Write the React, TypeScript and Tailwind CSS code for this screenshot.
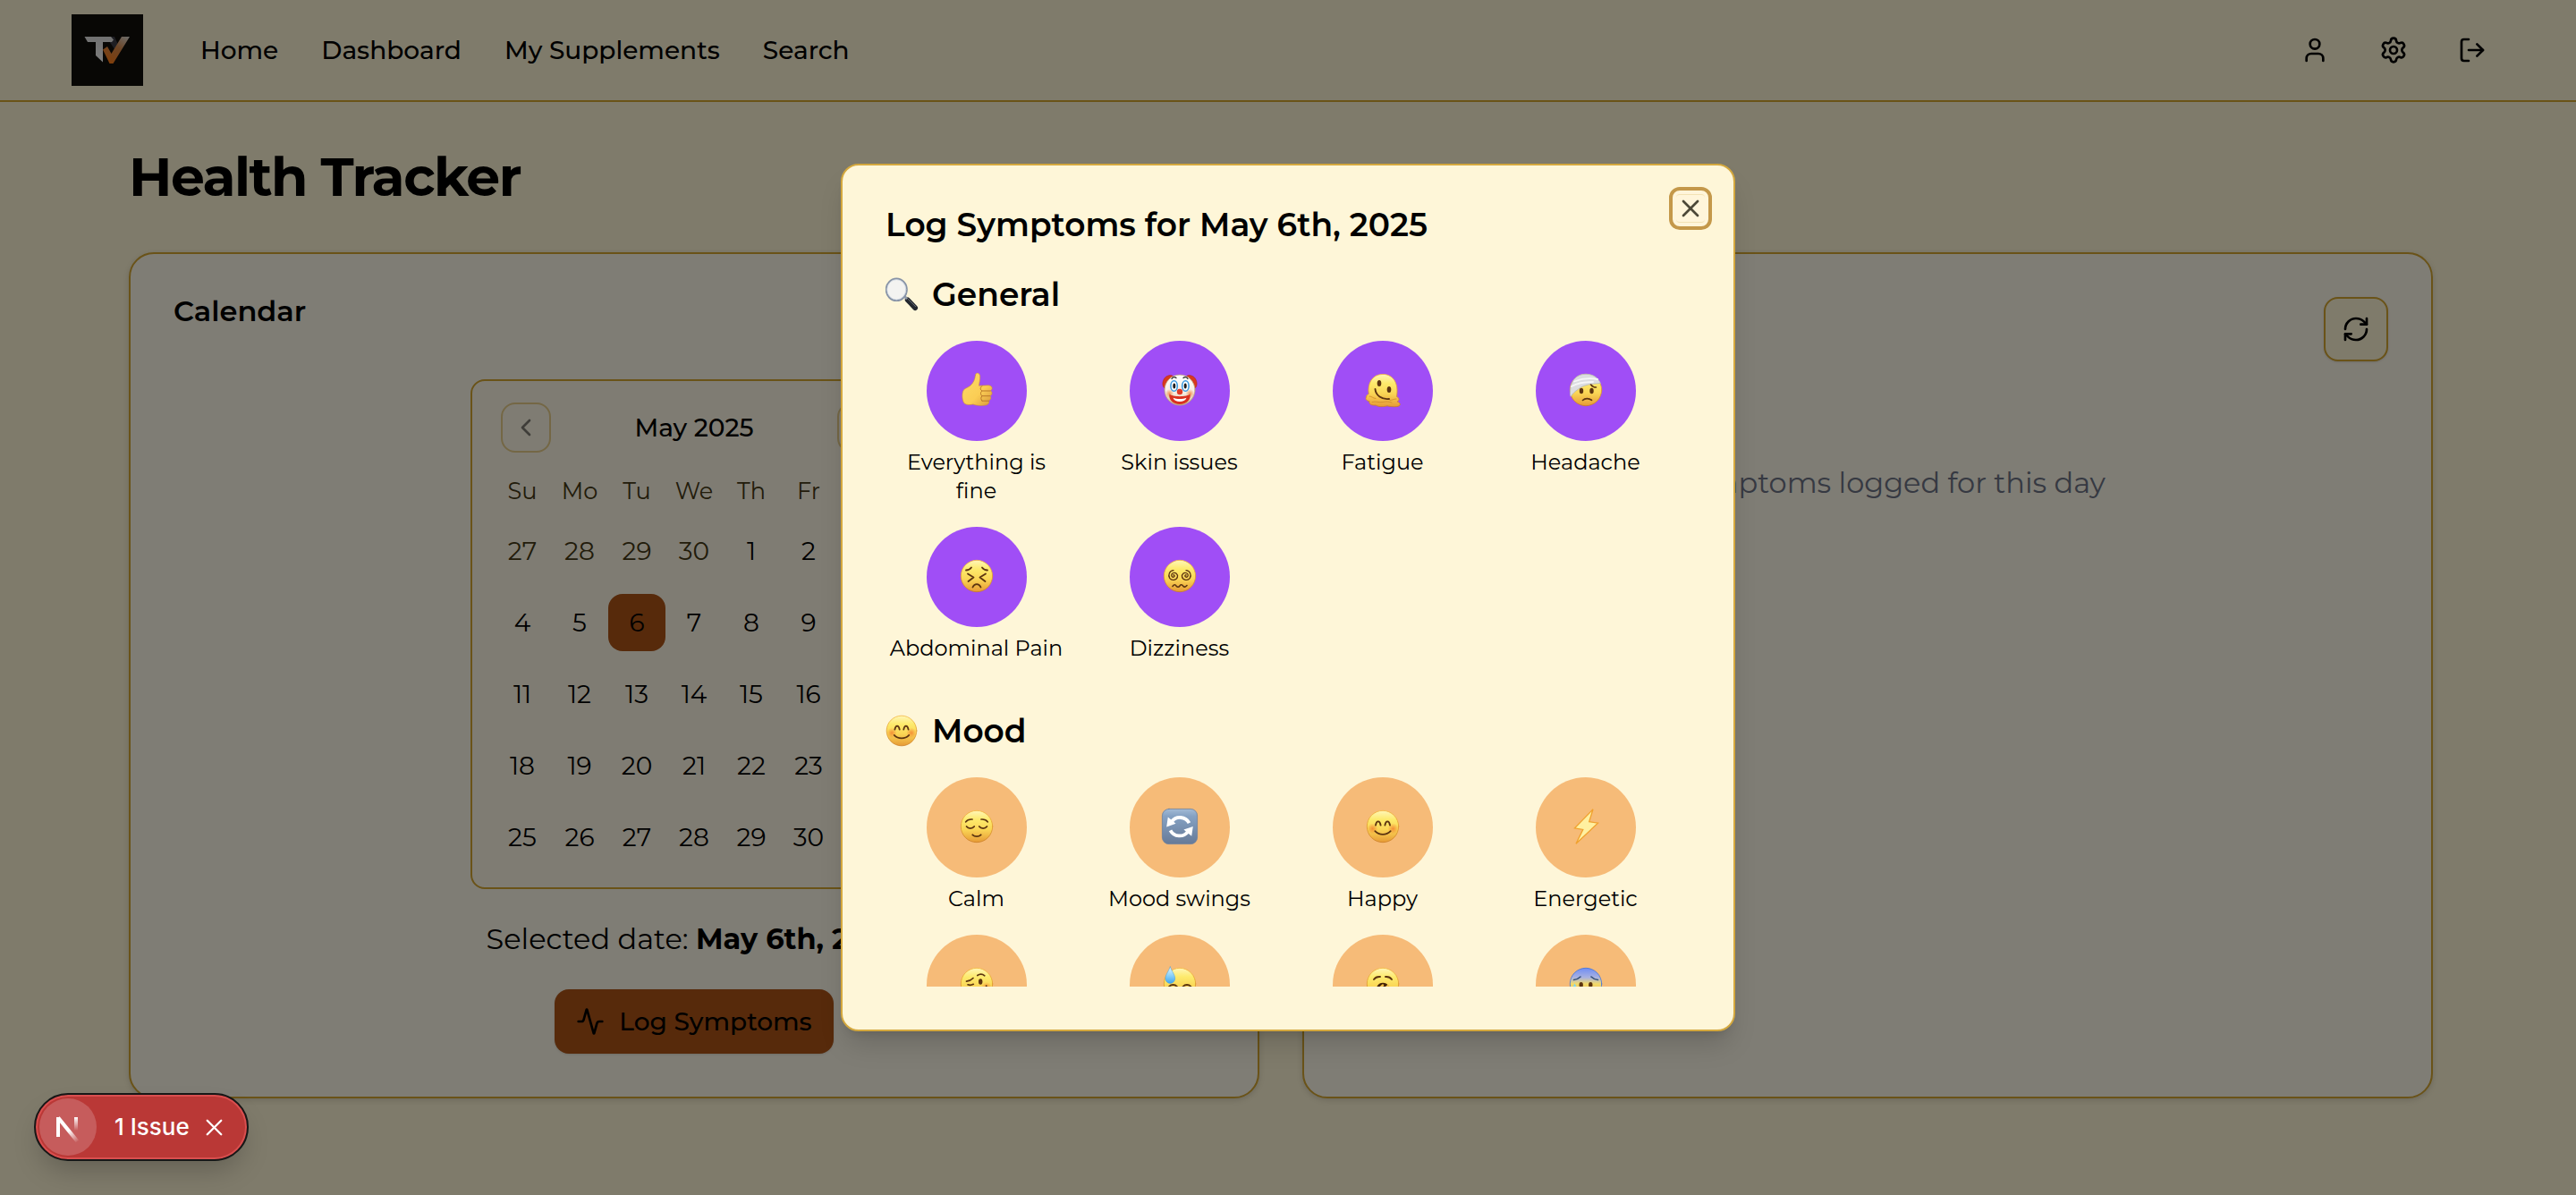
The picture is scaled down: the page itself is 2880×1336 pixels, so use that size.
import type { ReactNode } from 'react'
import { Activity, ChevronLeft, ChevronRight, LogOut, RefreshCw, Settings, User, X } from 'lucide-react'

const INK = '#5c3410'

function Svg({ label, size = 40, children }: { label: string; size?: number; children: ReactNode }) {
  return (
    <svg role="img" aria-label={label} width={size} height={size} viewBox="0 0 40 40" fill="none" strokeLinecap="round" strokeLinejoin="round" className="shrink-0 overflow-visible">
      {children}
    </svg>
  )
}

function Defs() {
  return (
    <svg width="0" height="0" className="absolute" aria-hidden="true">
      <defs>
        <linearGradient id="face" x1="0" y1="0" x2="0" y2="1">
          <stop offset="0" stopColor="#fff6b8" />
          <stop offset="0.28" stopColor="#fdea6c" />
          <stop offset="0.6" stopColor="#fad555" />
          <stop offset="1" stopColor="#e69a35" />
        </linearGradient>
        <linearGradient id="edge" x1="0" y1="0" x2="0" y2="1">
          <stop offset="0" stopColor="#f3b63a" />
          <stop offset="1" stopColor="#c97c22" />
        </linearGradient>
        <linearGradient id="anxious" x1="0" y1="0" x2="0" y2="1">
          <stop offset="0" stopColor="#6f8df5" />
          <stop offset="0.3" stopColor="#a9b2e0" />
          <stop offset="0.5" stopColor="#f3da6a" />
          <stop offset="1" stopColor="#e69a35" />
        </linearGradient>
        <linearGradient id="clown" x1="0" y1="0" x2="0" y2="1">
          <stop offset="0" stopColor="#ffffff" />
          <stop offset="0.6" stopColor="#f7ede2" />
          <stop offset="1" stopColor="#c9b48c" />
        </linearGradient>
        <radialGradient id="blush">
          <stop offset="0" stopColor="#f2792c" stopOpacity="0.75" />
          <stop offset="1" stopColor="#f2792c" stopOpacity="0" />
        </radialGradient>
        <linearGradient id="tile" x1="0" y1="0" x2="0" y2="1">
          <stop offset="0" stopColor="#a3bbd6" />
          <stop offset="0.2" stopColor="#86a2c3" />
          <stop offset="1" stopColor="#667a98" />
        </linearGradient>
        <linearGradient id="drop" x1="0" y1="0" x2="0" y2="1">
          <stop offset="0" stopColor="#e4f7ff" />
          <stop offset="0.5" stopColor="#8fd3fa" />
          <stop offset="1" stopColor="#3fa5ee" />
        </linearGradient>
        <linearGradient id="thumb" x1="0" y1="0" x2="1" y2="1">
          <stop offset="0" stopColor="#fddb6a" />
          <stop offset="0.6" stopColor="#fbcd54" />
          <stop offset="1" stopColor="#d6963a" />
        </linearGradient>
        <linearGradient id="silver" x1="0" y1="0" x2="0" y2="1">
          <stop offset="0" stopColor="#e2e2e2" />
          <stop offset="1" stopColor="#fafafa" />
        </linearGradient>
        <linearGradient id="ember" x1="0.9" y1="0" x2="0.3" y2="1">
          <stop offset="0" stopColor="#d9d3cc" />
          <stop offset="0.45" stopColor="#d98a4c" />
          <stop offset="1" stopColor="#ff7d18" />
        </linearGradient>
        <linearGradient id="nStroke" x1="0" y1="0" x2="0" y2="1">
          <stop offset="0" stopColor="#fff" />
          <stop offset="1" stopColor="#fff" stopOpacity="0" />
        </linearGradient>
        <linearGradient id="nDiagonal" gradientUnits="userSpaceOnUse" x1="22" y1="25" x2="32" y2="38">
          <stop offset="0" stopColor="#fff" />
          <stop offset="1" stopColor="#fff" stopOpacity="0" />
        </linearGradient>
      </defs>
    </svg>
  )
}

const Head = ({ fill = 'url(#face)', stroke = 'url(#edge)' }: { fill?: string; stroke?: string }) => (
  <circle cx="20" cy="20" r="17.7" fill={fill} stroke={stroke} strokeWidth="0.8" />
)

const Smile = ({ size }: { size?: number }) => (
  <Svg label="😊" size={size}>
    <Head />
    <circle cx="8.5" cy="22.5" r="6" fill="url(#blush)" />
    <circle cx="31.5" cy="22.5" r="6" fill="url(#blush)" />
    <path d="M12 18.600c1-5.600 4.600-5.600 5.600 0M22.400 18.600c1-5.600 4.600-5.600 5.600 0" stroke={INK} strokeWidth="1.9" />
    <path d="M11.300 25.200c4.700 4.900 12.700 4.900 17.400 0" stroke={INK} strokeWidth="1.8" />
  </Svg>
)

const Magnifier = () => (
  <Svg label="🔍" size={38}>
    <path d="M27 26.500 36 36" stroke="#23272e" strokeWidth="6" />
    <path d="M27 25 36.500 34.500" stroke="#6d7480" strokeWidth="1" />
    <path d="m22 21 3.500 3.500" stroke="#8f98a6" strokeWidth="3" />
    <ellipse cx="14" cy="14.500" rx="12.200" ry="13" fill="#f3f3f1" stroke="#8793a6" strokeWidth="2" />
    <ellipse cx="14" cy="14.500" rx="11" ry="11.800" stroke="#c9d2de" strokeWidth="0.8" />
  </Svg>
)

const Thumb = () => (
  <Svg label="👍">
    <path d="M18.500 3.500c.4-3.600 5-3.200 5.200 1.300.2 3.700-.9 7.200-1.200 10.400l10.500-.4c4.600 0 5.400 4.700 2.400 6 2.400 1.400 2.200 4.800-.4 5.700 1.600 1.600 1 4.600-1.500 5.300 1 2.300-.3 4.700-3.500 5.200-4.500.8-10.500.6-14-1-2.400.7-7.500.8-9.500-.7-3-2.500-3.600-12.300-1-15.500 1.800-2.200 5.300-2.600 7.500-4.800 3.500-3.400 5-7 5.500-11.500Z" fill="url(#thumb)" stroke="#cf9033" strokeWidth="0.600" />
    <path d="M26 21h9M26 26.700h8.600M26 32.200h7.400M26 15.500c-2.400 1.400-2.400 4.200 0 5.500-2 1.500-2 4.300 0 5.700-1.700 1.500-1.500 4.100 0 5.500" stroke="#b9772a" strokeWidth="1" />
  </Svg>
)

const Clown = () => (
  <Svg label="🤡">
    <path d="M2 17c-3-4 0-12 5-13 3-1 5 0 6 1L6 19ZM38 17c3-4 0-12-5-13-3-1-5 0-6 1l7 14Z" fill="#d8391f" stroke="#a82713" strokeWidth="0.500" />
    <circle cx="20" cy="20" r="17" fill="url(#clown)" stroke="#b9a177" strokeWidth="0.800" />
    <circle cx="8.500" cy="24" r="5" fill="url(#blush)" />
    <circle cx="31.500" cy="24" r="5" fill="url(#blush)" />
    <path d="M11 7.500c1-2 3.500-2.500 5-1M24 6.500c1.500-1.500 4-1 5 1" stroke="#2b2b2b" strokeWidth="1.200" />
    <ellipse cx="13.600" cy="15.500" rx="3.700" ry="5.800" fill="#fff" stroke="#3d9be0" strokeWidth="1.600" />
    <ellipse cx="26.400" cy="15.500" rx="3.700" ry="5.800" fill="#fff" stroke="#3d9be0" strokeWidth="1.600" />
    <ellipse cx="13.800" cy="15.500" rx="1.500" ry="3" fill="#1f1b1b" />
    <ellipse cx="26.200" cy="15.500" rx="1.500" ry="3" fill="#1f1b1b" />
    <path d="M8.500 24.500c3 3.500 20 3.500 23 0 1.500 6-4 11.500-11.500 11.500S7 30.500 8.500 24.500Z" fill="#d9311f" />
    <path d="M12.500 28.800c4 1.700 11 1.700 15 0-1 3-4 4.200-7.500 4.200s-6.500-1.200-7.500-4.200Z" fill="#fff" />
    <circle cx="20" cy="22" r="3.200" fill="#e03a26" />
  </Svg>
)

const Melting = () => (
  <Svg label="🫠">
    <path d="M1.500 28c-1.500 2 .5 4.500 3.500 4.500-1 3.500 3 5 7 4.500 4 2.500 10 1.500 13 .8 5 1.200 13 1.500 14-.8 1-2-1.500-3.500-3-4 3-1 2.500-4.500-.5-5.500C38 13 32 2.400 20 2.400S2.500 13 4.300 24.500c-1.300.5-3 1.800-2.800 3.500Z" fill="url(#face)" stroke="url(#edge)" strokeWidth="0.800" />
    <ellipse cx="16" cy="12.500" rx="2.300" ry="3.500" fill={INK} />
    <ellipse cx="27" cy="19.500" rx="2.300" ry="3.500" fill={INK} />
    <path d="M11.500 19c.5 7 7.500 12 15.500 11" stroke={INK} strokeWidth="1.900" />
    <path d="M5 27c3 0 4 2.500 7 2.500M28 31.500c2.500 0 4-1.500 7-1.500M8 33.500c4-1.500 8 1 12 0s7-.5 10 .5" stroke="#d48f2d" strokeWidth="0.900" />
  </Svg>
)

const Bandage = () => (
  <Svg label="🤕">
    <Head />
    <path d="M2.500 26C1.500 10 9 2.300 20 2.300c8 0 13.500 3.700 16.400 10.200-9.400.5-19.400 1.500-25.400 7C8 21.500 5 24 3.500 27Z" fill="#dcdde0" stroke="#b4b6bc" strokeWidth="0.800" />
    <path d="M7 10.500c9-3.500 18-4 26-2.500M4 16c8-4.500 15-5 24-5" stroke="#f6f6f7" strokeWidth="1.800" />
    <ellipse cx="15" cy="21" rx="2.200" ry="3.300" fill={INK} />
    <ellipse cx="26.500" cy="21" rx="2.200" ry="3.300" fill={INK} />
    <path d="M25.500 14c2 2.500 4 3 6 3M16.500 31.500c2.500-2.500 7-2.500 10-.2" stroke={INK} strokeWidth="1.600" />
  </Svg>
)

const Persevere = () => (
  <Svg label="😣">
    <Head />
    <path d="M8 13.500c2.500 0 4.500-1 6-3M32 13.500c-2.500 0-4.500-1-6-3M10 17.500l6.500 4-6 4.500M30 17.500l-6.500 4 6 4.500M15.500 32.500c2-4.500 7-4.500 9 0" stroke={INK} strokeWidth="1.800" />
  </Svg>
)

const Dizzy = () => (
  <Svg label="😵‍💫">
    <Head />
    <path d="M12.800 18.800c1.600-.4 2 2 .2 2.400-2.400.4-3.300-3-.8-4.400 3-1.600 6 1.200 5.200 4.200-1 3.700-6.500 4.600-8.700 1.300-2.200-3.600 0-8.300 4.300-8.600" stroke={INK} strokeWidth="1.300" />
    <path d="M27.200 18.800c-1.600-.4-2 2-.2 2.400 2.400.4 3.300-3 .8-4.400-3-1.600-6 1.200-5.200 4.200 1 3.700 6.500 4.600 8.700 1.300 2.200-3.600 0-8.300-4.300-8.600" stroke={INK} strokeWidth="1.300" />
    <path d="M12 31.500c1.800-2.400 3-2 4.200-.3 1.300 1.500 2.600 1.300 3.800-.3 1.200-1.600 2.500-1.400 3.800.3 1.200 1.500 2.400 1.200 4.200-.7" stroke={INK} strokeWidth="1.600" />
  </Svg>
)

const Calm = () => (
  <Svg label="😌">
    <Head />
    <path d="M7.600 15c1.800-2.400 4.500-3.200 7.500-2.900M32.400 15c-1.800-2.400-4.500-3.200-7.500-2.900" stroke={INK} strokeWidth="1.500" />
    <path d="M8.600 20c2 2.700 6.600 2.700 8.600 0M22.800 20c2 2.700 6.600 2.700 8.600 0M15.300 29.300c2.500 2.500 6.900 2.500 9.400 0" stroke={INK} strokeWidth="1.800" />
  </Svg>
)

const Cycle = () => (
  <Svg label="🔄">
    <rect x="0.400" y="0.400" width="39.200" height="39.200" rx="7.500" fill="url(#tile)" stroke="#6b809f" strokeWidth="0.800" />
    <path d="M30.500 16.200A11.600 11.600 0 0 0 11 14.500M9.500 24.300a11.600 11.600 0 0 0 19.500 1.500" stroke="#fff" strokeWidth="3.800" strokeLinecap="butt" />
    <path d="M5.200 20.400 6.800 9.600l8.800 7.200ZM34.800 20l-1.600 10.800-8.800-7.200Z" fill="#fff" />
  </Svg>
)

const Bolt = () => (
  <Svg label="⚡">
    <path d="M28 .8 7.500 21.800l9.300 1.600L9 39.200l24.500-23-9.800-1.500Z" fill="#fff0a0" stroke="#f0a12e" strokeWidth="1.300" strokeLinejoin="miter" />
  </Svg>
)

const Woozy = () => (
  <Svg label="🥴">
    <Head />
    <circle cx="31" cy="24" r="6" fill="url(#blush)" />
    <path d="M8.500 17.200c3-.3 5.500-1.600 7.500-3.700M10 20.800c2 .8 4.300.6 6.300-.5M20.800 10.500c2.500-1.700 5.500-1.700 8 .3" stroke={INK} strokeWidth="1.700" />
    <ellipse cx="24.200" cy="17.500" rx="2.200" ry="3.300" fill={INK} />
    <path d="M30.700 22v4" stroke={INK} strokeWidth="1.700" />
  </Svg>
)

const Sweat = () => (
  <Svg label="😓">
    <Head />
    <path d="M9.300 1c2 5.500 5.400 8.800 5.400 13a5.400 5.400 0 0 1-10.800 0C3.900 9.800 7.300 6.500 9.300 1Z" fill="url(#drop)" stroke="#3f9fe0" strokeWidth="0.500" />
    <path d="M8 23c2.500-2.700 6.500-2.700 9 0M23.500 23c2.500-2.700 6.500-2.700 9 0" stroke={INK} strokeWidth="1.800" />
  </Svg>
)

const Yawn = () => (
  <Svg label="🥱">
    <Head />
    <path d="M10 15c1.500-2.200 4-3.300 7-3M30 15c-1.500-2.200-4-3.300-7-3" stroke={INK} strokeWidth="1.900" />
    <path d="M13 24c2-7 12-7 14.500 0v8H13Z" fill="#432208" />
    <path d="M14 27 20 21.500M19 28l7-6" stroke="#f5c048" strokeWidth="2.400" />
  </Svg>
)

const Anxious = () => (
  <Svg label="😰">
    <Head fill="url(#anxious)" stroke="#3f74dc" />
    <path d="M6.500 15.500c3-.3 5.500-1.500 7.500-3.500M33.500 15.500c-3-.3-5.500-1.500-7.500-3.500" stroke="#33507a" strokeWidth="1.600" />
    <ellipse cx="14.700" cy="21" rx="2.200" ry="3" fill={INK} />
    <ellipse cx="25.300" cy="21" rx="2.200" ry="3" fill={INK} />
    <path d="M7.500 19.500c1 2.500 2.500 4 2.500 6.200a2.600 2.600 0 0 1-5 0c0-2.200 1.500-3.700 2.500-6.200Z" fill="#7fd6f2" />
  </Svg>
)

function Symptom({ icon, label, tone }: { icon: ReactNode; label?: string; tone: 'purple' | 'orange' }) {
  return (
    <button className="flex flex-col items-center gap-2">
      <span className={`flex size-28 items-center justify-center rounded-full pb-[3px] ${tone === 'purple' ? 'bg-[#a04ef6]' : 'bg-[#f6bb78]'}`}>
        {icon}
      </span>
      {label && <span className="text-center text-2xl leading-8">{label}</span>}
    </button>
  )
}

function SectionTitle({ icon, children }: { icon: ReactNode; children: ReactNode }) {
  return (
    <h3 className="mb-6 flex items-center gap-4 text-4xl leading-[56px] font-semibold">
      <span className="flex w-9 justify-center">{icon}</span>
      {children}
    </h3>
  )
}

const weekdays = ['Su', 'Mo', 'Tu', 'We', 'Th', 'Fr', 'Sa']
const weeks = [
  [27, 28, 29, 30, 1, 2, 3],
  [4, 5, 6, 7, 8, 9, 10],
  [11, 12, 13, 14, 15, 16, 17],
  [18, 19, 20, 21, 22, 23, 24],
  [25, 26, 27, 28, 29, 30, 31],
]

const navButton = 'flex size-14 items-center justify-center rounded-2xl border-2 border-[#d4a630] opacity-50'

function Calendar() {
  return (
    <div className="w-[500px] rounded-2xl border-2 border-[#d4a630] bg-[#fef9e7] p-6">
      <div className="flex items-center justify-between px-2">
        <button className={navButton}><ChevronLeft size={32} /></button>
        <span className="text-[28px] leading-10 font-medium">May 2025</span>
        <button className={navButton}><ChevronRight size={32} /></button>
      </div>
      <div className="mt-6 grid grid-cols-7 text-center text-[25.600px] leading-[38px] text-[#443815]">
        {weekdays.map((d) => <span key={d}>{d}</span>)}
      </div>
      <div className="mt-4 flex flex-col gap-4">
        {weeks.map((week, w) => (
          <div key={w} className="grid grid-cols-7">
            {week.map((day, d) => (
              <span
                key={d}
                className={`flex size-16 items-center justify-center rounded-2xl text-[28px] ${
                  w === 0 && day > 20 ? 'text-[#443815]' : w === 1 && day === 6 ? 'bg-[#ae5416]' : ''
                }`}
              >
                {day}
              </span>
            ))}
          </div>
        ))}
      </div>
    </div>
  )
}

function Logo() {
  return (
    <svg viewBox="0 0 80 80" className="size-20 bg-[#110e0b]" aria-label="TV">
      <path d="M42 25h6l4 9-4 5-6-9Z" fill="#3c3c46" />
      <path d="M14.500 25H44l3 3.500-2 2.500H35v22.500L27 46V31h-9Z" fill="url(#silver)" />
      <path d="M65 25h-9L44.500 44 40 36l-5 3.500L42.500 55h4Z" fill="url(#ember)" />
    </svg>
  )
}

const card = 'flex h-[946px] flex-1 flex-col rounded-[28px] border-2 border-[#d4a630] bg-[#fffaeb] p-12 shadow-[0_2px_6px_rgba(0,0,0,0.15)]'
const iconButton = 'flex size-[72px] items-center justify-center'

export default function App() {
  return (
    <div className="relative h-[1336px] w-[2880px] overflow-hidden bg-[#fef6d6] font-['Montserrat','Inter',sans-serif] text-black">
      <Defs />
      <header className="flex h-[114px] items-center border-b-2 border-[#d4a630] px-20">
        <Logo />
        <nav className="ml-16 flex gap-12 text-[28px] leading-10 font-medium">
          <a>Home</a>
          <a>Dashboard</a>
          <a>My Supplements</a>
          <a>Search</a>
        </nav>
        <div className="ml-auto flex gap-4">
          <button className={iconButton}><User size={32} /></button>
          <button className={iconButton}><Settings size={32} /></button>
          <button className={iconButton}><LogOut size={32} /></button>
        </div>
      </header>

      <main className="w-[2864px] px-36 pt-12">
        <h1 className="text-6xl leading-[72px] font-bold tracking-tight">Health Tracker</h1>
        <div className="mt-12 flex gap-12">
          <section className={card}>
            <h2 className="text-[32px] leading-8 font-semibold">Calendar</h2>
            <div className="mt-[60px] flex flex-col items-center gap-8">
              <Calendar />
              <p className="text-[32px] leading-[48px]">
                Selected date: <strong className="font-bold">May 6th, 2025</strong>
              </p>
              <button className="flex h-[72px] items-center gap-4 rounded-2xl bg-[#ae5416] px-6 text-[28px] font-medium shadow-sm">
                <Activity size={32} />
                Log Symptoms
              </button>
            </div>
          </section>
          <section className={card}>
            <button className="flex size-[72px] items-center justify-center self-end rounded-2xl border-2 border-[#d4a630] bg-[#fef6d6] shadow-sm">
              <RefreshCw size={32} />
            </button>
            <p className="mt-28 text-center text-[32px] leading-[48px] text-[#6c7384]">No symptoms logged for this day</p>
          </section>
        </div>
      </main>

      <div className="absolute inset-0 flex items-center justify-center bg-black/50">
        <div role="dialog" className="relative h-[970px] w-[1000px] rounded-[20px] border-2 border-[#d4a83e] bg-[#fef6d8] p-12 shadow-[0_20px_30px_-6px_rgba(0,0,0,0.15),0_8px_12px_-8px_rgba(0,0,0,0.15)]">
          <button className="absolute top-[24px] right-[24px] flex size-12 items-center justify-center rounded-xl border-4 border-[#c4984a] bg-[#fff5da]">
            <span className="flex size-8 items-center justify-center rounded border-y border-[#f3e2b4]">
              <X size={32} className="shrink-0 text-[#4c4837]" />
            </span>
          </button>
          <h2 className="text-4xl leading-9 font-semibold">Log Symptoms for May 6th, 2025</h2>
          <div className="mt-8 h-[802px] overflow-hidden pr-4">
            <SectionTitle icon={<Magnifier />}>General</SectionTitle>
            <div className="grid grid-cols-4 items-start gap-6">
              <Symptom tone="purple" icon={<Thumb />} label="Everything is fine" />
              <Symptom tone="purple" icon={<Clown />} label="Skin issues" />
              <Symptom tone="purple" icon={<Melting />} label="Fatigue" />
              <Symptom tone="purple" icon={<Bandage />} label="Headache" />
              <Symptom tone="purple" icon={<Persevere />} label="Abdominal Pain" />
              <Symptom tone="purple" icon={<Dizzy />} label="Dizziness" />
            </div>
            <div className="mt-12">
              <SectionTitle icon={<Smile size={38} />}>Mood</SectionTitle>
              <div className="grid grid-cols-4 items-start gap-6">
                <Symptom tone="orange" icon={<Calm />} label="Calm" />
                <Symptom tone="orange" icon={<Cycle />} label="Mood swings" />
                <Symptom tone="orange" icon={<Smile />} label="Happy" />
                <Symptom tone="orange" icon={<Bolt />} label="Energetic" />
                <Symptom tone="orange" icon={<Woozy />} />
                <Symptom tone="orange" icon={<Sweat />} />
                <Symptom tone="orange" icon={<Yawn />} />
                <Symptom tone="orange" icon={<Anxious />} />
              </div>
            </div>
          </div>
        </div>
      </div>

      <div className="absolute top-[1222px] left-[38px] flex h-[76px] w-[240px] items-center rounded-full border-2 border-[#171717] bg-[#ba3836] pl-1 text-white shadow-[inset_0_0_0_2px_#d94f4f,0_16px_32px_-8px_rgba(0,0,0,0.24)]">
        <span className="flex size-16 shrink-0 items-center justify-center rounded-full bg-[#c65c5c]">
          <svg width="40" height="40" viewBox="0 0 40 40" fill="none" className="-translate-x-px -translate-y-px">
            <path d="M10 32V10" stroke="#fff" strokeWidth="4" />
            <path d="M10 10.500 31.500 37" stroke="url(#nDiagonal)" strokeWidth="4.200" />
            <rect x="28" y="10" width="4" height="15" fill="url(#nStroke)" />
          </svg>
        </span>
        <span className="ml-5 shrink-0 font-['Inter',sans-serif] text-[26px] leading-8 font-medium whitespace-nowrap">1 Issue</span>
        <X size={31} strokeWidth={1.8} className="ml-[12px] shrink-0" />
      </div>
    </div>
  )
}
